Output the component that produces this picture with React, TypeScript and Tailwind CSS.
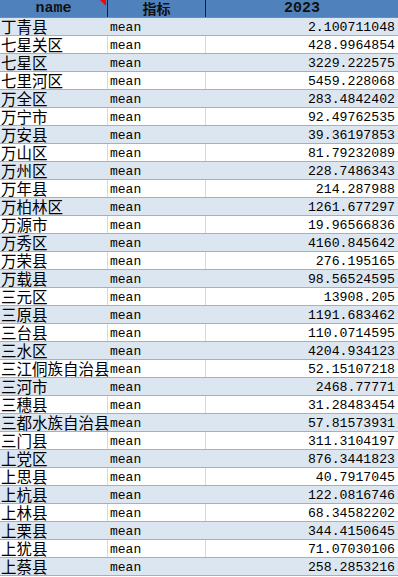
import React from "react";

const rows: [string, string][] = [
  ["丁青县", "2.100711048"],
  ["七星关区", "428.9964854"],
  ["七星区", "3229.222575"],
  ["七里河区", "5459.228068"],
  ["万全区", "283.4842402"],
  ["万宁市", "92.49762535"],
  ["万安县", "39.36197853"],
  ["万山区", "81.79232089"],
  ["万州区", "228.7486343"],
  ["万年县", "214.287988"],
  ["万柏林区", "1261.677297"],
  ["万源市", "19.96566836"],
  ["万秀区", "4160.845642"],
  ["万荣县", "276.195165"],
  ["万载县", "98.56524595"],
  ["三元区", "13908.205"],
  ["三原县", "1191.683462"],
  ["三台县", "110.0714595"],
  ["三水区", "4204.934123"],
  ["三江侗族自治县", "52.15107218"],
  ["三河市", "2468.77771"],
  ["三穗县", "31.28483454"],
  ["三都水族自治县", "57.81573931"],
  ["三门县", "311.3104197"],
  ["上党区", "876.3441823"],
  ["上思县", "40.7917045"],
  ["上杭县", "122.0816746"],
  ["上林县", "68.34582202"],
  ["上栗县", "344.4150645"],
  ["上犹县", "71.07030106"],
  ["上蔡县", "258.2853216"],
];

const cjk = "font-['Noto_Sans_CJK_SC','Noto_Sans',sans-serif]";
const mono = "font-['Liberation_Mono','DejaVu_Sans_Mono',monospace]";

export default function App() {
  return (
    <div className="w-[398px] h-[577px] overflow-hidden bg-white text-black">
      <div className="grid grid-cols-[108px_98px_192px] h-[18px] bg-[#4f81bd] border-b border-[#3cb371]">
        <div className="relative flex items-center justify-center border-r border-[#10203a] h-[17px]">
          <span className={`${mono} text-[15px] font-bold leading-[17px] text-[#111]`}>name</span>
          <div className="absolute top-0 right-px w-0 h-0 border-t-[6px] border-t-[#ff0000] border-l-[6px] border-l-transparent" />
        </div>
        <div className="flex items-center justify-center border-r border-[#10203a] h-[17px]">
          <span className={`${cjk} text-[14px] font-bold leading-[17px] text-[#111]`}>指标</span>
        </div>
        <div className="flex items-center justify-center h-[17px]">
          <span className={`${mono} text-[15px] font-bold leading-[17px] text-[#111]`}>2023</span>
        </div>
      </div>
      {rows.map(([name, val], i) => {
        const shaded = i % 2 === 0;
        return (
          <div
            key={name}
            className={`grid grid-cols-[108px_98px_192px] h-[18px] border-b border-[#95b3d7] ${shaded ? "bg-[#dce6f1]" : "bg-white"}`}
          >
            <div className={`flex items-end pl-px overflow-visible whitespace-nowrap ${shaded ? "" : "border-r border-[#d9d9d9]"}`}>
              <span className={`${cjk} text-[15.5px] leading-[17px] relative z-10`}>{name}</span>
            </div>
            <div className={`flex items-end pl-[2px] ${shaded ? "" : "border-r border-[#d9d9d9]"}`}>
              <span className={`${mono} text-[13px] leading-[15px]`}>mean</span>
            </div>
            <div className="flex items-end justify-end pr-[3px]">
              <span className={`${mono} text-[13.2px] leading-[15px]`}>{val}</span>
            </div>
          </div>
        );
      })}
    </div>
  );
}
